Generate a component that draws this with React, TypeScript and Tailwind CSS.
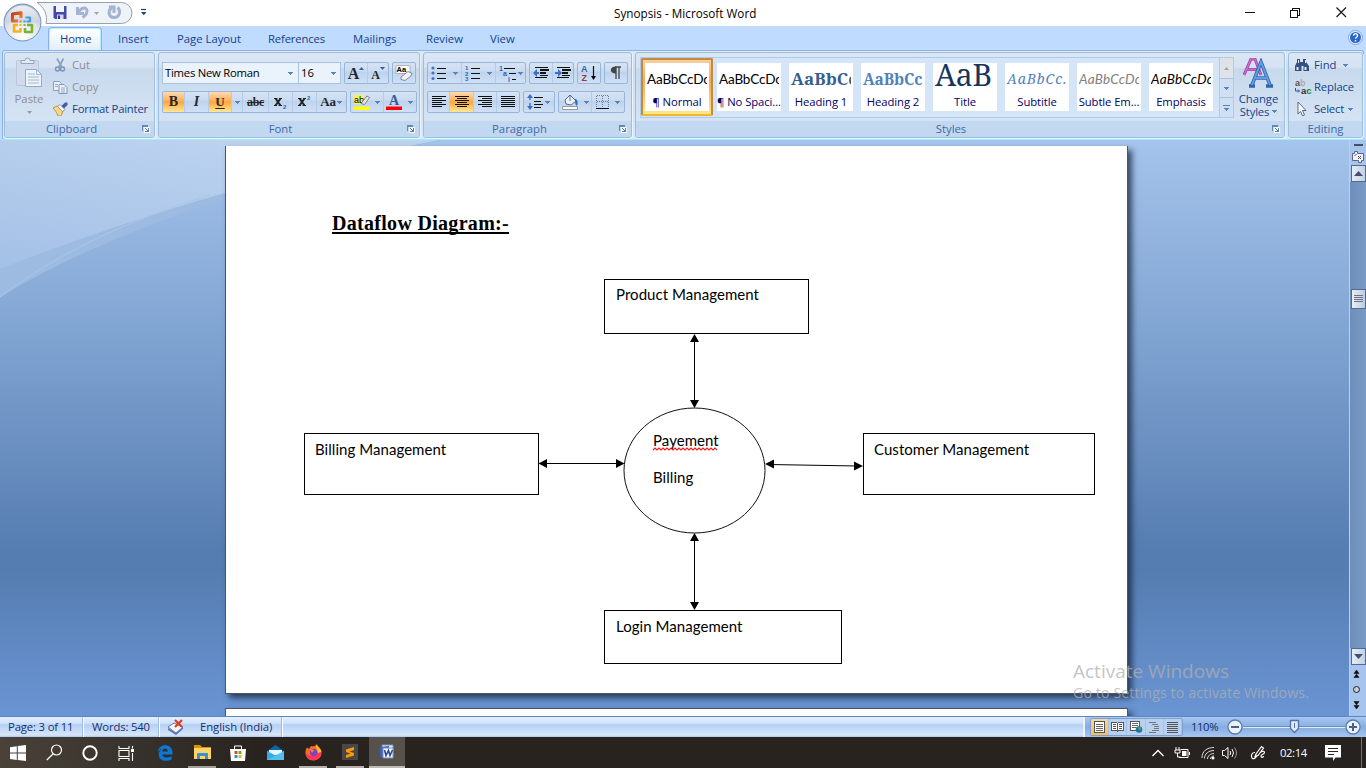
import React from "react";

type Kids = { children?: React.ReactNode; c?: string };

function Caret({ c = "" }: { c?: string }) {
  return (
    <svg className={"shrink-0 " + c} width="5" height="3" viewBox="0 0 5 3" shapeRendering="crispEdges">
      <path d="M0 0h5v1h-1v1h-1v1h-1v-1h-1v-1h-1z" fill="#5c83bb" />
    </svg>
  );
}

function Group({ label, c = "", launcher = true, labelCls = "", children }: Kids & { label: string; launcher?: boolean; labelCls?: string }) {
  return (
    <section className={"flex h-[86px] shrink-0 flex-col overflow-hidden rounded-[3px] border border-[#9ebfdb] bg-[linear-gradient(#dae6f4_0,#d6e3f3_14px,#c8d9ed_16px,#d5e4f4_69px)] shadow-[1px_1px_0_#eaf3fc] " + c}>
      <div className="flex h-[68px] shrink-0">{children}</div>
      <div className="flex h-[16px] items-center bg-[#c1d8f0] text-[#3e6aaa]">
        <span className={"flex-1 text-center leading-[16px] " + labelCls}>{label}</span>
        {launcher && (
          <svg className="mr-[4px] -mt-px" width="8" height="8" viewBox="0 0 8 8" shapeRendering="crispEdges">
            <path d="M0 6V0h6M1 1h5" fill="none" stroke="#6688b4" />
            <path d="M2 2h6v6h-6z" fill="#f4f9ff" />
            <path d="M3 3h1v1h1v1h1v-2h1v4h-4v-1h2v-1h-1v-1h-1z" fill="#5b7ca8" />
          </svg>
        )}
      </div>
    </section>
  );
}

function Bar({ c = "", children }: Kids) {
  return (
    <div className={"flex h-[22px] shrink-0 overflow-hidden rounded-[2px] border border-[#96b6dc] bg-[linear-gradient(#d5e3f4_0,#cbdcf1_8px,#bdd3ed_9px,#cfe0f6_20px)] " + c}>{children}</div>
  );
}

function Btn({ c = "", on = false, children }: Kids & { on?: boolean }) {
  return (
    <div className={"flex h-full shrink-0 items-center justify-center border-r border-[#b4cce8] last:border-r-0 " + (on ? "bg-[linear-gradient(#fbdbb5_0,#fdb45e_8px,#fda63d_10px,#ffe895_20px)] " : "") + c}>
      {children}
    </div>
  );
}

function AlignIcon({ kind }: { kind: "l" | "c" | "r" | "j" }) {
  const rows = [14, 10, 14, 10, 14, 10];
  return (
    <svg width="14" height="12" viewBox="0 0 14 12" shapeRendering="crispEdges">
      {rows.map((w, i) => {
        const n = kind === "j" ? 14 : w;
        const x = kind === "r" ? 14 - n : kind === "c" ? (14 - n) / 2 : 0;
        return <rect key={i} x={x} y={i * 2} width={n} height="1" fill="#111" />;
      })}
    </svg>
  );
}

function ListIcon({ kind }: { kind: "dot" | "num" | "multi" }) {
  if (kind === "multi")
    return (
      <svg width="18" height="17" viewBox="0 0 18 17">
        <path d="M5 3.500h11M10 8.500h7M13 14.500h4" stroke="#111" shapeRendering="crispEdges" />
        <g fill="#3763b5" fontFamily="Liberation Sans" fontSize="7" fontWeight="700">
          <text x="0" y="5.500">1</text>
          <text x="4" y="11">a</text>
          <text x="9" y="17">i</text>
        </g>
      </svg>
    );
  return (
    <svg width="15" height="16" viewBox="0 0 15 16">
      <path d="M6 3.500h9M6 8.500h9M6 13.500h9" stroke="#111" shapeRendering="crispEdges" />
      {kind === "dot" ? (
        <g fill="#4a74bd"><circle cx="2" cy="3" r="1.600" /><circle cx="2" cy="8" r="1.600" /><circle cx="2" cy="13.500" r="1.600" /></g>
      ) : (
        <g fill="#3763b5" fontFamily="Liberation Sans" fontSize="6" fontWeight="700">
          <text x="0" y="5">1</text><text x="0" y="10.500">2</text><text x="0" y="16">3</text>
        </g>
      )}
    </svg>
  );
}

function IndentIcon({ right = false }: { right?: boolean }) {
  return (
    <svg width="17" height="14" viewBox="0 0 17 14">
      <g fill="#111" shapeRendering="crispEdges">
        <path d="M2 1h13v1H2zM7 3h9v2H7zM7 6h6v2H7zM7 9h8v1H7zM2 11h12v1H2z" />
      </g>
      {right ? <path d="M0 6h3v-3l4 4-4 4v-3H0z" fill="#3a6fc4" /> : <path d="M6 6H4v-3L0 7l4 4v-3h2z" fill="#3a6fc4" />}
    </svg>
  );
}

function OfficeOrb() {
  return (
    <svg className="absolute left-[3px] top-[3px]" width="40" height="40" viewBox="0 0 40 40">
      <defs>
        <radialGradient id="orb" cx=".5" cy=".85" r=".9"><stop offset="0" stopColor="#fff" /><stop offset=".5" stopColor="#dfe5ee" /><stop offset="1" stopColor="#9dabc2" /></radialGradient>
        <linearGradient id="orbTop" x2="0" y2="1"><stop offset="0" stopColor="#fafcff" /><stop offset="1" stopColor="#c7d0de" /></linearGradient>
        <linearGradient id="orbRed" x2="1" y2="1"><stop offset="0" stopColor="#c8371a" /><stop offset="1" stopColor="#f58a1f" /></linearGradient>
      </defs>
      <circle cx="19.500" cy="19.500" r="18.500" fill="url(#orb)" stroke="#7890b2" />
      <path d="M2.500 19.500a17 17 0 0 1 34 0z" fill="url(#orbTop)" opacity=".8" />
      <g fill="none" strokeLinejoin="round">
        <path d="M15 18H9.500v-7l8.500-1.200V15" stroke="url(#orbRed)" strokeWidth="3" />
        <path d="M22.500 14.500H27v4h-3.500" stroke="#4a9bdb" strokeWidth="2.200" />
        <path d="M15 22H11v6.500h6.500V25" stroke="#f6b11c" strokeWidth="2.600" />
        <path d="M24 22h5v7h-7v-4" stroke="#7ab52c" strokeWidth="2.600" />
      </g>
      <path d="M16.500 17.500h2v2h-2z" fill="#ee7f1c" /><path d="M20.500 17.500h2v2h-2z" fill="#4a9bdb" />
      <path d="M16.500 21h2v2h-2z" fill="#f6b11c" /><path d="M20.500 21h2v2h-2z" fill="#7ab52c" />
    </svg>
  );
}

const tabs: [string, string][] = [
  ["Insert", "w-[30px] ml-[16px]"], ["Page Layout", "w-[63px] ml-[29px]"], ["References", "w-[57px] ml-[28px] tracking-[-0.15px]"],
  ["Mailings", "w-[45px] ml-[28px]"], ["Review", "w-[37px] ml-[28px]"], ["View", "w-[26px] ml-[27px]"],
];

const styles: { name: string; sample: string; cls: string; on?: boolean }[] = [
  { name: "¶ Normal", sample: "AaBbCcDc", cls: "font-['Lato'] text-[13.500px] tracking-[-0.15px] text-black", on: true },
  { name: "¶ No Spaci...", sample: "AaBbCcDc", cls: "font-['Lato'] text-[13.500px] tracking-[-0.15px] text-black" },
  { name: "Heading 1", sample: "AaBbCc", cls: "font-['Noto_Serif','DejaVu_Serif',serif] font-bold text-[17px] tracking-[0.1px] text-[#365f91]" },
  { name: "Heading 2", sample: "AaBbCc", cls: "font-['Noto_Serif','DejaVu_Serif',serif] font-bold text-[15.500px] tracking-[-0.1px] text-[#4f81bd]" },
  { name: "Title", sample: "AaB", cls: "font-['Noto_Serif','DejaVu_Serif',serif] text-[30px] tracking-[-0.3px] text-[#17365d] pb-[8px]" },
  { name: "Subtitle", sample: "AaBbCc.", cls: "font-['Noto_Serif','DejaVu_Serif',serif] italic text-[14px] tracking-[0.9px] text-[#4f81bd]" },
  { name: "Subtle Em...", sample: "AaBbCcDc", cls: "font-['Lato'] italic text-[13.500px] tracking-[0.25px] text-[#808080]" },
  { name: "Emphasis", sample: "AaBbCcDc", cls: "font-['Lato'] italic text-[13.500px] tracking-[0.25px] text-black" },
];

function TitleBar() {
  return (
    <header className="relative flex h-[26px] shrink-0 items-center bg-white">
      <svg className="absolute left-[34px] top-[1px]" width="116" height="24" viewBox="0 0 116 24">
        <path d="M3 1.500H87.500a10.500 10.500 0 0 1 0 21H12C14 14 10 6 3 1.500z" fill="#eef3fa" stroke="#9aa0a8" />
        <g transform="translate(19.500 5)">
          <path d="M0 0h13v13H1.500L0 11.500z" fill="#4547a9" /><path d="M2.500 0h8v6h-8z" fill="#f3f5fd" /><path d="M3.500 8.500h6.500V13H3.500z" fill="#d2d5ee" /><path d="M4.500 9.500h2V13h-2z" fill="#33358d" />
        </g>
        <path d="M43.500 6v6.500h6.500M44.500 11.500c2-5 8.500-6 8.500-1.500 0 3-2 5-4.500 6.500" fill="none" stroke="#a2b4d2" strokeWidth="3" />
        <path d="M60 11h5l-2.500 3z" fill="#a3a3a8" />
        <path d="M83.500 6.500c3.500 3 2.500 10-3.500 10-5.500 0-6.500-6.500-2.500-9.500M75 6h5v6" fill="none" stroke="#a2b4d2" strokeWidth="3" />
        <path d="M107 8.500h5" stroke="#1f3f75" strokeWidth="1.200" /><path d="M107 11h5.500l-2.750 3.200z" fill="#1f3f75" />
      </svg>
      <h1 className="ml-[614px] w-[142px] whitespace-nowrap text-[11.700px] tracking-[0.02px] text-black">Synopsis - Microsoft Word</h1>
      <svg className="ml-[489px]" width="102" height="14" viewBox="0 0 102 14">
        <path d="M0 6.500h10M45.500 4.500h7v7h-7zM47.500 4v-1.500h7v7h-2" fill="none" stroke="#111" shapeRendering="crispEdges" />
        <path d="M91.500 1.500l9.500 9.500M101 1.500L91.500 11" stroke="#111" strokeWidth="1.100" />
      </svg>
    </header>
  );
}

function Tabs() {
  return (
    <nav className="flex h-[24px] shrink-0 items-end bg-[#bfdbff] text-[#15428b]">
      <div className="ml-[48px] h-[23px] w-[54px] rounded-t-[4px] border border-b-0 border-[#8db2e3] bg-[linear-gradient(#fff,#e3eefb)] pl-[11px] leading-[21px] tracking-[-0.15px] shadow-[inset_1px_1px_0_#b5f0ff,inset_-1px_0_0_#b5f0ff]">Home</div>
      <div className="flex">
        {tabs.map(([t, c]) => <div key={t} className={"h-[22px] shrink-0 whitespace-nowrap leading-[21px] " + c}>{t}</div>)}
      </div>
      <svg className="mb-[5px] ml-auto mr-[3px]" width="15" height="15" viewBox="0 0 15 15">
        <circle cx="7.500" cy="7.500" r="7" fill="#e8f0fb" stroke="#7394c8" strokeWidth=".8" /><circle cx="7.500" cy="7.500" r="5.500" fill="#2866d1" />
        <path d="M5.500 5.800c0-3 4.200-2.800 4 0-.1 1.300-1.900 1.500-1.900 3M7.500 10v1.400" fill="none" stroke="#fff" strokeWidth="1.400" />
      </svg>
    </nav>
  );
}

function Clipboard() {
  return (
    <Group label="Clipboard" c="w-[151px]" labelCls="pr-[4px]">
      <div className="flex w-[48px] flex-col items-center pt-[4px] text-[#8e8e90]">
        <svg width="28" height="32" viewBox="0 0 28 32">
          <rect x="1.500" y="3.500" width="22" height="25" rx="1.500" fill="#d0dced" stroke="#b9c7db" />
          <path d="M6 6.500V3.500h4a2.500 2.500 0 0 1 5 0h4v3z" fill="#e4eaf3" stroke="#96a3b8" />
          <path d="M10.500 12.500h11l5 5v12h-16z" fill="#eef3fa" stroke="#94aac9" /><path d="M21.500 12.500v5h5M13 17h7M13 20h11M13 23h11M13 26h11" fill="none" stroke="#a4b8d4" />
        </svg>
        <span className="leading-[20px]">Paste</span>
        <svg className="mt-[2px]" width="5" height="3"><path d="M0 0h5l-2.500 3z" fill="#9a9a9c" /></svg>
      </div>
      <div className="flex flex-col pt-[1px] text-[#8e8e90]">
        <div className="flex h-[22px] items-center gap-[4px]">
          <svg className="mx-[1px]" width="13" height="16" viewBox="0 0 13 16"><path d="M3 1.500l5 9M9.500 1.500l-5 9" stroke="#8ba0bd" strokeWidth="1.700" /><circle cx="3.500" cy="12" r="2" fill="none" stroke="#7d95b8" strokeWidth="1.500" /><circle cx="8.500" cy="12" r="2" fill="none" stroke="#7d95b8" strokeWidth="1.500" /></svg>
          <span>Cut</span>
        </div>
        <div className="flex h-[22px] items-center gap-[4px]">
          <svg width="15" height="14" viewBox="0 0 15 14"><path d="M.500 1.500h6l2 2v7h-8z" fill="#e9f0f9" stroke="#8d9fbb" /><path d="M6 4.500h5l3 3v6H6z" fill="#e9f0f9" stroke="#8297b8" /><path d="M2 4.500h3M2 6.500h3M8 8h4M8 10h4M8 12h4" stroke="#92a9ca" /></svg>
          <span>Copy</span>
        </div>
        <div className="flex h-[22px] items-center gap-[4px] text-[#15428b]">
          <svg width="15" height="14" viewBox="0 0 15 14"><path d="M0 6l4-2 6 5-2 5H5C4 11 2 8 0 6z" fill="#f5da81" stroke="#a88538" strokeWidth=".8" /><path d="M4.500 4.500L7 2.500l5 5-2.500 2z" fill="#f7f7f7" stroke="#777" strokeWidth=".7" /><path d="M8.500 4L12 .500h2.500V3L11 6.500z" fill="#3f609b" /></svg>
          <span className="whitespace-nowrap tracking-[-0.2px]">Format Painter</span>
        </div>
      </div>
    </Group>
  );
}

function FontGroup() {
  const serif = "font-['Liberation_Serif'] font-bold text-[#262626] ";
  return (
    <Group label="Font" c="ml-[3px] w-[262px]" labelCls="pr-[5px]">
      <div className="flex flex-col gap-[7px] pl-[3px] pt-[9px]">
        <div className="flex">
          <div className="flex h-[22px] w-[137px] items-center justify-between border border-[#a6c3e6] bg-[#eaf2fb] pl-[2px] pr-[5px] text-black"><span className="tracking-[-0.25px]">Times New Roman</span><Caret /></div>
          <div className="-ml-px flex h-[22px] w-[43px] items-center justify-between border border-[#a6c3e6] bg-[#eaf2fb] pl-[2px] pr-[4px] text-black"><span>16</span><Caret /></div>
          <Bar c="ml-[3px] w-[45px]">
            <Btn c="w-[23px]"><span className={serif + "pt-[2px] text-[16px]"}>A</span><svg className="mb-[10px]" width="5" height="3"><path d="M0 3h5L2.500 0z" fill="#3461ae" /></svg></Btn>
            <Btn c="w-[20px]"><span className={serif + "pt-[4px] text-[12px]"}>A</span><svg className="mb-[10px]" width="5" height="3"><path d="M0 0h5L2.500 3z" fill="#3461ae" /></svg></Btn>
          </Bar>
          <Bar c="ml-[3px] w-[24px]">
            <Btn c="w-[22px]">
              <svg width="18" height="18" viewBox="0 0 18 18"><rect x="1" y="1.500" width="14" height="8" rx="1" fill="#fff" stroke="#999" strokeWidth=".7" /><text x="1.500" y="8" fontSize="7.500" fontWeight="700" fontFamily="Liberation Sans">Aa</text><path d="M6 13l7-5.500 4 2-1 2.500-6 4.500-4-1z" fill="#eef0f6" stroke="#7b7f98" strokeWidth=".9" /></svg>
            </Btn>
          </Bar>
        </div>
        <div className="flex">
          <Bar c="w-[185px]">
            <Btn on c={"w-[22px] text-[14px] " + serif}>B</Btn>
            <Btn c={"w-[24px] text-[14px] italic " + serif}>I</Btn>
            <Btn on c={"w-[23px] text-[13px] underline underline-offset-2 " + serif}>U</Btn>
            <Btn c="w-[11px]"><Caret /></Btn>
            <Btn c={"w-[26px] text-[12px] tracking-[-0.3px] line-through " + serif}>abc</Btn>
            <Btn c="w-[24px]"><svg width="16" height="16" viewBox="0 0 16 16"><path d="M2.500 4.500l5 7M7.500 4.500l-5 7" stroke="#222" strokeWidth="2" /><path d="M1 4.500h3.500M6 4.500h3M1 11.500h3M5.500 11.500H9" stroke="#222" /><text x="10" y="14.500" fill="#3763b5" fontSize="6" fontWeight="700" fontFamily="Liberation Sans">2</text></svg></Btn>
            <Btn c="w-[24px]"><svg width="16" height="16" viewBox="0 0 16 16"><path d="M2.500 4.500l5 7M7.500 4.500l-5 7" stroke="#222" strokeWidth="2" /><path d="M1 4.500h3.500M6 4.500h3M1 11.500h3M5.500 11.500H9" stroke="#222" /><text x="10" y="5.500" fill="#3763b5" fontSize="6" fontWeight="700" fontFamily="Liberation Sans">2</text></svg></Btn>
            <Btn c="w-[29px] gap-[1px] pr-[1px]"><span className={serif + "text-[13px] tracking-[-0.3px]"}>Aa</span><Caret /></Btn>
          </Bar>
          <Bar c="ml-[3px] w-[67px]">
            <Btn c="w-[33px] gap-[4px] pr-[2px]">
              <svg width="18" height="18" viewBox="0 0 18 18"><path d="M1 2h10v9H1z" fill="#f3f36a" /><text x="1" y="9.500" fontSize="9" fontFamily="Liberation Sans">ab</text><path d="M8 10.500l6-7.500 2.500 1.500-5 7z" fill="#e9e9ee" stroke="#667" strokeWidth=".8" /><path d="M1 13.500h16V17H1z" fill="#ff0" /></svg><Caret />
            </Btn>
            <Btn c="w-[32px] gap-[6px] pr-[1px]">
              <svg width="16" height="18" viewBox="0 0 16 18"><text x="3" y="12" fontSize="14" fontWeight="700" fill="#36599b" fontFamily="Liberation Serif">A</text><path d="M0 13.500h16V17H0z" fill="#f00" /></svg><Caret />
            </Btn>
          </Bar>
        </div>
      </div>
    </Group>
  );
}

function Paragraph() {
  return (
    <Group label="Paragraph" c="ml-[3px] w-[209px]" labelCls="pr-[4px]">
      <div className="flex flex-col gap-[7px] pl-[3px] pt-[9px]">
        <div className="flex">
          <Bar c="w-[99px]">
            <Btn c="w-[34px] gap-[7px]"><ListIcon kind="dot" /><Caret /></Btn>
            <Btn c="w-[34px] gap-[7px]"><ListIcon kind="num" /><Caret /></Btn>
            <Btn c="w-[29px] gap-[1px]"><ListIcon kind="multi" /><Caret /></Btn>
          </Bar>
          <Bar c="ml-[3px] w-[45px]"><Btn c="w-[23px]"><IndentIcon /></Btn><Btn c="w-[20px]"><IndentIcon right /></Btn></Bar>
          <Bar c="ml-[3px] w-[24px]"><Btn c="w-[22px]">
            <svg width="18" height="18" viewBox="0 0 18 18"><text x="1" y="8" fontSize="9" fontWeight="700" fill="#3461ae" fontFamily="Liberation Sans">A</text><text x="1.500" y="16.500" fontSize="9" fontWeight="700" fill="#a03838" fontFamily="Liberation Sans">Z</text><path d="M13.500 2v10" stroke="#111" strokeWidth="1.200" /><path d="M11 12h5l-2.500 4z" /></svg>
          </Btn></Bar>
          <Bar c="ml-[3px] w-[24px]"><Btn c="w-[22px]"><svg width="12" height="14" viewBox="0 0 12 14"><path d="M5 1h6M6 1v12M9 1v12" stroke="#444" strokeWidth="1.300" /><path d="M6 .500v7c-7 0-7-7 0-7z" fill="#444" /></svg></Btn></Bar>
        </div>
        <div className="flex">
          <Bar c="w-[93px]">
            <Btn c="w-[22px]"><AlignIcon kind="l" /></Btn><Btn on c="w-[24px]"><AlignIcon kind="c" /></Btn><Btn c="w-[23px]"><AlignIcon kind="r" /></Btn><Btn c="w-[22px]"><AlignIcon kind="j" /></Btn>
          </Bar>
          <Bar c="ml-[3px] w-[32px]"><Btn c="w-[30px] gap-[1px] pr-[2px]">
            <svg width="18" height="18" viewBox="0 0 18 18"><path d="M4 3v12" stroke="#3a6fc4" strokeWidth="1.500" strokeDasharray="4 3" /><path d="M1 5l3-4 3 4zM1 13l3 4 3-4z" fill="#3a6fc4" /><path d="M8 4.500h9M8 8.500h7M8 11.500h9M8 14.500h7" stroke="#111" shapeRendering="crispEdges" /></svg><Caret />
          </Btn></Bar>
          <Bar c="ml-[3px] w-[67px]">
            <Btn c="w-[33px] gap-[5px]"><svg width="17" height="18" viewBox="0 0 17 18"><path d="M3 7l5-5 6 6-5 4-5-1z" fill="#edf2f9" stroke="#506b99" /><path d="M8 2v6" stroke="#506b99" /><path d="M13 6c3 0 3 4 2 7-2-1-2-4-2-7z" fill="#2e6bc7" /><path d="M.500 13.500h15v3H.500z" fill="#fff" stroke="#999" /></svg><Caret /></Btn>
            <Btn c="w-[32px] gap-[5px]"><svg width="14" height="15" viewBox="0 0 14 15" shapeRendering="crispEdges"><path d="M.500 .500v12M6.500 .500v12M12.500 .500v12M.500 .500h12M.500 6.500h12" fill="none" stroke="#667b9d" strokeDasharray="1 1" /><path d="M0 13.500h13" stroke="#111" /></svg><Caret /></Btn>
          </Bar>
        </div>
      </div>
    </Group>
  );
}

function Styles() {
  return (
    <Group label="Styles" c="ml-[3px] w-[650px]" labelCls="pr-[6px]">
      <div className="ml-[4px] mt-[4px] flex h-[61px] w-[594px] border border-[#b0cbe9] bg-[#d5e5f8]">
        {styles.map((s) => (
          <div key={s.name} className={"flex h-[58px] w-[72px] shrink-0 items-center justify-center " + (s.on ? "rounded-[2px] border-2 border-[#c48a40] border-b-[#f1b928] bg-[linear-gradient(#f6cf9b,#f7ac52_40%,#ffe68e)]" : "")}>
            <div className="flex h-[48px] w-[64px] shrink-0 flex-col overflow-hidden bg-white px-[3px]">
              <div className={"-ml-px flex h-[32px] w-[60px] shrink-0 items-center overflow-hidden whitespace-nowrap " + s.cls}>{s.sample}</div>
              <div className="-mx-[3px] -mt-px whitespace-nowrap text-center leading-[15px] tracking-[-0.1px] text-[#000066]">{s.name}</div>
            </div>
          </div>
        ))}
        <div className="ml-auto flex w-[14px] flex-col border-l border-[#b0cbe9]">
          <div className="flex h-[20px] items-center justify-center bg-[#dfe2e6]"><svg width="5" height="3"><path d="M0 3h5L2.500 0z" fill="#a0a4aa" /></svg></div>
          <div className="flex h-[20px] items-center justify-center border-y border-[#a6c3e6] bg-[#cfe0f5]"><Caret /></div>
          <div className="flex h-[19px] flex-col items-center justify-center gap-[2px] bg-[#cfe0f5]"><div className="h-px w-[7px] bg-[#5c83bb]" /><Caret /></div>
        </div>
      </div>
      <div className="flex w-[49px] flex-col items-center pt-[5px] text-[#15428b]">
        <svg width="31" height="30" viewBox="0 0 31 30">
          <path d="M1 17L8 1h4l6 16M4 11.500h10" fill="none" stroke="#9a4bad" strokeWidth="3" /><path d="M1 17L8 1h4l6 16M4 11.500h10" fill="none" stroke="#cf68c9" strokeWidth="1.500" />
          <path d="M6 28h6M23 28h7M9 27l9-23 9 23M12 20h12" fill="none" stroke="#2d65ad" strokeWidth="3.500" /><path d="M9 27l9-23 9 23M12 20h12" fill="none" stroke="#619be0" strokeWidth="2" />
        </svg>
        <span className="mt-[4px] leading-[13px]">Change</span>
        <span className="flex items-center gap-[3px] leading-[13px] tracking-[-0.15px]">Styles <Caret /></span>
      </div>
    </Group>
  );
}

function Editing() {
  return (
    <Group label="Editing" c="ml-[3px] w-[75px]" launcher={false}>
      <div className="flex flex-col pl-[5px] pt-[1px] text-[#15428b]">
        <div className="flex h-[22px] items-center gap-[3px]">
          <svg width="17" height="14" viewBox="0 0 17 14"><path d="M3 1h3v3h3V1h3v3l3 4v5H9.500V8h-2v5H1V8l2-4z" fill="#34527f" /><path d="M2.500 9h2v3h-2zM10.500 9h2v3h-2zM4 2h1v3H4zM11 2h1v3h-1z" fill="#dfe9f7" /></svg>
          <span>Find</span><Caret c="ml-[3px]" />
        </div>
        <div className="flex h-[22px] items-center gap-[2px]">
          <svg width="18" height="17" viewBox="0 0 18 17"><text x="1" y="7" fontSize="9" fontWeight="700" fill="#555" fontFamily="Liberation Sans">a<tspan fill="#aaa">b</tspan></text><text x="7" y="15" fontSize="9.500" fontWeight="700" fill="#333" fontFamily="Liberation Sans">a<tspan fill="#23843a">c</tspan></text><path d="M1.500 9v3h4M4 10.500L5.500 12 4 13.500" stroke="#2857a5" fill="none" /></svg>
          <span className="tracking-[-0.15px]">Replace</span>
        </div>
        <div className="flex h-[22px] items-center gap-[3px]">
          <svg width="17" height="16" viewBox="0 0 17 16"><path d="M4 1l8 8.500H8.500l2 4.500-2 .8-2-4.500L4 13z" fill="#fff" stroke="#55698a" /></svg>
          <span className="tracking-[-0.2px]">Select</span><Caret c="ml-px" />
        </div>
      </div>
    </Group>
  );
}

const nodes: { t: string; c: string }[] = [
  { t: "Product Management", c: "left-[378px] top-[133px] h-[55px] w-[205px] pt-[6px] pl-[11px]" },
  { t: "Billing Management", c: "left-[78px] top-[287px] h-[62px] w-[235px] pt-[7px] pl-[10px]" },
  { t: "Customer Management", c: "left-[637px] top-[287px] h-[62px] w-[232px] pt-[7px] pl-[10px]" },
  { t: "Login Management", c: "left-[378px] top-[464px] h-[54px] w-[238px] pt-[7px] pl-[11px]" },
];

function Page() {
  return (
    <article className="relative h-[548px] w-[903px] shrink-0 border-b border-l border-r border-[#4c5560] bg-white font-['Lato'] text-[15px] leading-[16px] tracking-[0.05px] text-black shadow-[4px_4px_6px_rgba(20,35,60,0.75)]">
      <h2 className="absolute left-[106px] top-[68px] whitespace-nowrap border-b-2 border-black font-['Liberation_Serif'] text-[20px] font-bold leading-[18px] tracking-[0.3px]">Dataflow Diagram:-</h2>
      {nodes.map((n) => <div key={n.t} className={"absolute whitespace-nowrap border border-black " + n.c}>{n.t}</div>)}
      <svg className="absolute left-0 top-0" width="901" height="547" viewBox="0 0 901 547">
        <ellipse cx="468.500" cy="324.500" rx="70.500" ry="62.500" fill="none" stroke="#111" />
        <path d="M468.500 192v66M468.500 392v68M318 317.500h76M543 318.500L632 320" stroke="#000" fill="none" />
        <path d="M468.500 188l4.500 8h-9zM468.500 262l4.500-8h-9zM468.500 387l4.500 8h-9zM468.500 464l4.500-8h-9zM312.500 317.500l8.500-4.500v9zM398.500 317.500l-8.500-4.500v9zM539 318l9-4.500v9zM637 320l-9-4.500v9z" />
        <path d="M427 304l2-2 2 2 2-2 2 2 2-2 2 2 2-2 2 2 2-2 2 2 2-2 2 2 2-2 2 2 2-2 2 2 2-2 2 2 2-2 2 2 2-2 2 2 2-2 2 2 2-2 2 2 2-2 2 2 2-2 2 2 2-2 2 2" fill="none" stroke="#f02020" strokeWidth="1.200" />
      </svg>
      <span className="absolute left-[427px] top-[286px]">Payement</span>
      <span className="absolute left-[427px] top-[323px]">Billing</span>
    </article>
  );
}

function Workspace() {
  return (
    <main className="relative flex h-[576px] shrink-0 overflow-hidden bg-[linear-gradient(#a6c5ee_0,#a3c2ea_10px,#7fa3d1_200px,#567db1_410px,#567db1_430px,#6a95d3_576px)]">
      <svg className="absolute left-0 top-0" width="440" height="160" viewBox="0 0 440 160">
        <defs><linearGradient id="sw" x1="0" y1="1" x2=".6" y2="0"><stop offset="0" stopColor="#a4c0e6" /><stop offset="1" stopColor="#bdd4f0" /></linearGradient></defs>
        <path d="M0 0H440Q150 66 0 157z" fill="#9dbbe1" /><path d="M0 0H438Q200 50 0 129z" fill="url(#sw)" />
        <path d="M0 157Q80 95 210 55" fill="none" stroke="#a9c5ea" strokeWidth="1" />
      </svg>
      <div className="relative ml-[225px] mt-[6px] flex w-[903px] shrink-0 flex-col gap-[14px]">
        <Page />
        <div className="h-[20px] w-[903px] shrink-0 border border-[#4c5560] bg-white shadow-[4px_4px_6px_rgba(20,35,60,0.7)]" />
      </div>
      <div className="ml-auto flex h-full w-[17px] flex-col items-center border-l border-[#b6d1f3] bg-[#a6c4ee]">
        <div className="mt-[4px] h-[2px] w-[9px] bg-[#474e68]" />
        <svg className="mt-[4px]" width="12" height="13" viewBox="0 0 12 13"><path d="M.500 3.500h2v-2h3v2h6v7h-2v2h-3v-2h-6z" fill="#f5f2f5" stroke="#5b6883" /><path d="M2.500 5.500l2-1M6 6l3 3M6 9l3-3" stroke="#444d68" /></svg>
        <div className="mt-[2px] flex h-[17px] w-[15px] items-center justify-center border border-[#516a9b] bg-[linear-gradient(90deg,#e6ecf5,#c2d1e3)]"><svg width="9" height="5"><path d="M0 5h9L4.500 0z" fill="#434d70" /></svg></div>
        <div className="flex h-[466px] w-[16px] flex-col items-center bg-[linear-gradient(90deg,#6d8eb9,#7a9bc5)]">
          <div className="mt-[107px] flex h-[20px] w-[15px] items-center justify-center border border-[#516a9b] bg-[linear-gradient(90deg,#e9eef5,#bccddd)]"><svg width="9" height="8" shapeRendering="crispEdges"><path d="M0 .500h9M0 2.500h9M0 4.500h9M0 6.500h9" stroke="#6b7480" /></svg></div>
        </div>
        <div className="flex h-[17px] w-[15px] items-center justify-center border border-[#516a9b] bg-[linear-gradient(90deg,#e6ecf5,#c2d1e3)]"><svg width="9" height="5"><path d="M0 0h9L4.500 5z" fill="#434d70" /></svg></div>
        <svg className="-ml-[4px]" width="13" height="48" viewBox="0 0 13 48"><path d="M4 8.500h5L6.500 5zM4 12.500h5L6.500 9zM4 36.500h5L6.500 40zM4 40.500h5L6.500 44z" fill="#111" stroke="#111" strokeWidth=".6" /><circle cx="6.500" cy="24.500" r="3" fill="#c9ced4" stroke="#222" /></svg>
      </div>
      <div className="absolute left-[1073px] top-[519px] whitespace-nowrap font-['Open_Sans'] text-[#b0b0b0]/75">
        <div className="text-[19px] leading-[24px]">Activate Windows</div>
        <div className="text-[14.200px] leading-[20px] tracking-[0.1px]">Go to Settings to activate Windows.</div>
      </div>
    </main>
  );
}

function StatusBar() {
  const sep = "h-[20px] w-[2px] shrink-0 border-l border-[#9cbbe4] bg-white ";
  return (
    <footer className="flex h-[21px] shrink-0 items-center border-t border-[#5f86bc] bg-[linear-gradient(#e3efff_0,#d0e3fb_6px,#b4d0f5_8px,#d7e6f9_18px,#a8c6ee_20px)] text-[#15306b]">
      <span className="w-[74px] pl-[8px] whitespace-nowrap tracking-[-0.15px]">Page: 3 of 11</span><i className={"ml-[8px] " + sep} />
      <span className="w-[67px] pl-[8px] whitespace-nowrap tracking-[-0.15px]">Words: 540</span><i className={"ml-[7px] " + sep} />
      <svg className="ml-[7px]" width="18" height="16" viewBox="0 0 18 16"><path d="M1 8l6-4 9 4-7 6z" fill="#f8f8fb" stroke="#67779d" /><path d="M1 9v2l8 5 7-6V8l-7 6z" fill="#5874b8" /><path d="M8 1l7 7M15 1L8 8" stroke="#e23b20" strokeWidth="2.200" /></svg>
      <span className="ml-[15px] w-[73px] whitespace-nowrap tracking-[-0.05px]">English (India)</span><i className={"ml-[8px] " + sep} />
      <div className="ml-auto flex h-[20px] items-center border-l-2 border-white/80 bg-[linear-gradient(#a9c8f3,#86ade0_50%,#a6c6f1)] pl-[5px]">
        <div className="flex h-[18px] w-[93px] items-center overflow-hidden rounded-[2px] border border-[#7f9fcb] bg-[#b8d1f1]">
          {[0, 1, 2, 3, 4].map((i) => (
            <div key={i} className={"flex h-full flex-1 items-center justify-center border-r border-[#a5c2e8] " + (i === 0 ? "bg-[linear-gradient(#f6d6a2,#fdbe59)]" : "")}>
              <svg width="13" height="12" viewBox="0 0 13 12" shapeRendering="crispEdges">
                {i === 0 && <><path d="M1.500 .500h10v11h-10z" fill="#fff" stroke="#555" /><path d="M3 3.500h7M3 5.500h7M3 7.500h7M3 9.500h7" stroke="#666" /></>}
                {i === 1 && <><path d="M.500 1.500h5l1 1 1-1h5v8h-5l-1 1-1-1h-5z" fill="#fff" stroke="#555" /><path d="M6.500 2v9M2 3.500h3M2 5.500h3M2 7.500h3M8 3.500h3M8 5.500h3M8 7.500h3" stroke="#555" /></>}
                {i === 2 && <><path d="M.500 .500h9v9h-9z" fill="#fff" stroke="#555" /><path d="M2 2.500h6M2 4.500h6M2 6.500h4" stroke="#666" /><circle cx="9" cy="8.500" r="3.300" fill="#286ea9" shapeRendering="auto" /><path d="M8 6h3v3h-2z" fill="#48a34b" /></>}
                {i === 3 && <path d="M1 1.500h7M4 3.500h6M6 5.500h5M6 7.500h5M4 9.500h7M1 11.500h7" stroke="#777" />}
                {i === 4 && <path d="M1 1.500h11M1 3.500h11M1 5.500h11M1 7.500h11M1 9.500h11M1 11.500h11" stroke="#555" />}
              </svg>
            </div>
          ))}
        </div>
        <span className="ml-[8px] w-[28px] whitespace-nowrap tracking-[-0.4px]">110%</span>
        <svg className="ml-[7px]" width="140" height="18" viewBox="0 0 140 18">
          <path d="M17 9.500h103" stroke="#dceafb" strokeWidth="1" /><path d="M17 8.500h103" stroke="#6a8ec2" strokeWidth="1" /><path d="M68.500 5v8" stroke="#6a8ec2" />
          {[9, 127].map((x) => <g key={x}><circle cx={x} cy="9" r="7" fill="#e9f1fb" stroke="#5c7cab" strokeWidth="1.300" /><path d={`M${x - 4} 9h8`} stroke="#44618f" strokeWidth="2" /></g>)}
          <path d="M127 5v8" stroke="#44618f" strokeWidth="2" />
          <path d="M64.500 2.500h8v8l-4 4-4-4z" fill="#dfeafa" stroke="#5173a6" strokeWidth="1.300" /><path d="M68.500 5v5" stroke="#5173a6" />
        </svg>
      </div>
    </footer>
  );
}

function Taskbar() {
  return (
    <div className="flex h-[31px] shrink-0 items-center bg-[linear-gradient(90deg,#4a4239_0,#3b352f_110px,#29231f_260px,#28231f_1050px,#25221f)]">
      <svg className="ml-[10px] shrink-0" width="16" height="16" viewBox="0 0 16 16"><path d="M0 2.200L6.800 1.200v6.400H0zM7.800 1L16 0v7.600H7.800zM0 8.500h6.800v6.400L0 14zM7.800 8.500H16V16l-8.200-1.100z" fill="#fff" /></svg>
      <svg className="ml-[20px] shrink-0" width="17" height="17" viewBox="0 0 17 17"><circle cx="10.500" cy="6" r="5" fill="none" stroke="#fff" strokeWidth="1.200" /><path d="M7 10L.800 16" stroke="#fff" strokeWidth="1.200" /></svg>
      <svg className="ml-[19px] shrink-0" width="16" height="16" viewBox="0 0 16 16"><circle cx="8" cy="8" r="6.700" fill="none" stroke="#fff" strokeWidth="1.900" /></svg>
      <svg className="ml-[20px] shrink-0" width="17" height="16" viewBox="0 0 17 16"><path d="M1 1v2.500h10V1M1 16v-2.500h10V16M1 5.500h10v6H1zM14.500 1v2.500M14.500 8v8" fill="none" stroke="#fff" strokeWidth="1.100" /><path d="M13 4h3v3h-3z" fill="#fff" /></svg>
      <svg className="ml-[22px] shrink-0" width="16" height="16" viewBox="0 0 16 16"><path d="M.500 7C1.500 2.500 4.500.200 8.500.200c5 0 7 3.800 7 7.600v1.600H5.200c.2 3 5.300 4.300 9.300 1.900v3.200C9 17.200 1.700 15.800 1.700 9.500c0-2.500 1.300-4.500 3.500-5.600C3 4.300 1.300 5.500.500 7zm4.800-.500h5.600C10.800 2.400 5.500 2.700 5.300 6.500z" fill="#0b78d7" /></svg>
      <div className="ml-[15px] flex h-[31px] w-[28px] shrink-0 flex-col items-center border-b-2 border-[#a49f9a]"><svg className="mt-[8px]" width="17" height="15" viewBox="0 0 17 15"><path d="M0 0h6l2 2h9v12H0z" fill="#d99500" /><path d="M0 3h17v11H0z" fill="#ffd46b" /><path d="M3 14V9q0-1 1-1h9q1 0 1 1v5h-3v-3H6v3z" fill="#3890d2" /></svg></div>
      <svg className="ml-[14px] shrink-0" width="16" height="16" viewBox="0 0 16 16"><path d="M4.500 4V1h7v3" fill="none" stroke="#fff" /><path d="M0 4h16l-1 12H1z" fill="#fff" /><path d="M4.500 6h3v3h-3z" fill="#e64b25" /><path d="M8.500 6h3v3h-3z" fill="#72ad27" /><path d="M4.500 10h3v3h-3z" fill="#2693d2" /><path d="M8.500 10h3v3h-3z" fill="#eeb72a" /></svg>
      <svg className="ml-[21px] shrink-0" width="17" height="16" viewBox="0 0 17 16"><path d="M0 6L8.500 0 17 6v9H0z" fill="#0a64a6" /><path d="M2 5h13v5H2z" fill="#e7f5fc" /><path d="M0 6l17 9H0z" fill="#38a9e8" /><path d="M17 6L0 15h17z" fill="#52bff2" /></svg>
      <div className="ml-[15px] flex h-[31px] w-[28px] shrink-0 flex-col items-center border-b-2 border-[#b5aeaa]">
        <svg className="mt-[7px]" width="17" height="17" viewBox="0 0 17 17"><path d="M2 3.500L4 5l2-3c5 1 5-1 6-2 0 2 4 4 4.500 7.500C17 13 13 16.500 8.500 16.500S0 13 .500 8c0-2 .500-3.500 1.500-4.500z" fill="#ff6b26" /><path d="M1 10c1 8 15 9 15-2l-3-5c1 5-2 10-6 9-3 0-5-2-6-2z" fill="#ff345c" /><path d="M11 0c0 2 5 4 5.300 8L13 9c0-4-3-5-2-9z" fill="#ffbd2e" /><circle cx="8.500" cy="8.500" r="3.700" fill="#8540be" /><path d="M5 5l4 1-2 3z" fill="#ff8b22" /></svg>
      </div>
      <div className="ml-[9px] flex h-[31px] w-[28px] shrink-0 flex-col items-center border-b-2 border-[#b5aeaa]"><svg className="mt-[7px]" width="16" height="16" viewBox="0 0 16 16"><path d="M0 0h16v16H0z" fill="#484848" /><path d="M4 5.500L12 3v3L7.500 7.500 12 9v2.500L4 14v-3l4.500-1.500L4 8z" fill="#ff9800" /></svg></div>
      <div className="ml-[5px] flex h-[31px] w-[36px] shrink-0 flex-col items-center border-b-2 border-[#c0bbb7] bg-[#57514c]"><svg className="mt-[7px]" width="16" height="16" viewBox="0 0 16 16"><path d="M3 1h11v11H3z" fill="#e5ecf7" stroke="#7f95c0" /><path d="M1 3l9-1v12l-9-1z" fill="#3d62b2" /><path d="M4 4h10v10H4z" fill="#f7f9fd" stroke="#7991bf" /><path d="M5.500 6l1.500 5.500L9.500 6.500l1.500 5L13.500 6" fill="none" stroke="#27489a" strokeWidth="1.600" /></svg></div>
      <svg className="ml-auto shrink-0" width="12" height="8" viewBox="0 0 12 8"><path d="M.500 7L6 1.500 11.500 7" fill="none" stroke="#fff" strokeWidth="1.300" /></svg>
      <svg className="ml-[10px] shrink-0" width="16" height="12" viewBox="0 0 16 12"><path d="M2 0v3M5 0v3M1 3h5v3H1zM3.500 6v4h3" fill="none" stroke="#fff" /><path d="M6.500 2.500H14v8H5" fill="none" stroke="#fff" /><path d="M8 4h4.500v5H8zM15 5h1v3h-1z" fill="#fff" /></svg>
      <svg className="ml-[11px] shrink-0" width="14" height="14" viewBox="0 0 14 14"><path d="M1 12C1 5 6 1.500 13 1.500M3.500 12.500c0-4.500 4-8 9.500-8M6.500 13c0-3 3-5.500 6.500-5.500M9.500 13c0-1.500 1.500-3 3.500-3" fill="none" stroke="#ddd" strokeWidth="1" /><circle cx="12" cy="12" r="1.500" fill="#fff" /></svg>
      <svg className="ml-[7px] shrink-0" width="17" height="14" viewBox="0 0 17 14"><path d="M.500 4.500h2L6 1.500v11L2.500 9.500h-2z" fill="none" stroke="#fff" /><path d="M8 5q1.500 2 0 4M10 3q3 4 0 8" fill="none" stroke="#fff" /><path d="M12.500 1.500q4 5.500 0 11" fill="none" stroke="#999" /></svg>
      <svg className="ml-[11px] shrink-0" width="17" height="16" viewBox="0 0 17 16"><path d="M6 9L11.500 1.500l2 1.500-5.500 7.500-3 1zM5 7.500c-3 0-4.500 3-3 5.500 2 2 4-.5 5.500-3M10 8c1.500-2 4.500-2.500 4.500-.5s-3.500 1.500-3.500 3.500 2.500 1.500 2.500 0" fill="none" stroke="#fff" strokeWidth="1.200" /></svg>
      <span className="ml-[13px] w-[28px] shrink-0 whitespace-nowrap tracking-[-0.4px] text-white">02:14</span>
      <svg className="ml-[17px] shrink-0" width="16" height="16" viewBox="0 0 16 16"><path d="M0 0h16v12.500h-5.500L8 16v-3.500H0z" fill="#fff" /><path d="M3 3.500h10M3 6.500h10M3 9.500h6" stroke="#2a2623" /></svg>
      <div className="ml-[20px] mr-[4px] h-[31px] w-px shrink-0 bg-[#77716d]" />
    </div>
  );
}

export default function App() {
  return (
    <div className="relative flex h-[768px] w-[1366px] flex-col overflow-hidden bg-[#bfdbff] font-['Open_Sans','Noto_Sans',sans-serif] text-[11.300px] leading-[16px]">
      <TitleBar />
      <Tabs />
      <div className="mx-[2px] flex h-[90px] shrink-0 rounded-[3px] border border-[#8db2e3] border-b-[#9bf0fb] bg-[linear-gradient(#dfeaf8,#cbdcf0_18px,#dae8f8)] pl-[1px] pt-[1px]">
        <Clipboard /><FontGroup /><Paragraph /><Styles /><Editing />
      </div>
      <Workspace />
      <StatusBar />
      <Taskbar />
      <OfficeOrb />
    </div>
  );
}
